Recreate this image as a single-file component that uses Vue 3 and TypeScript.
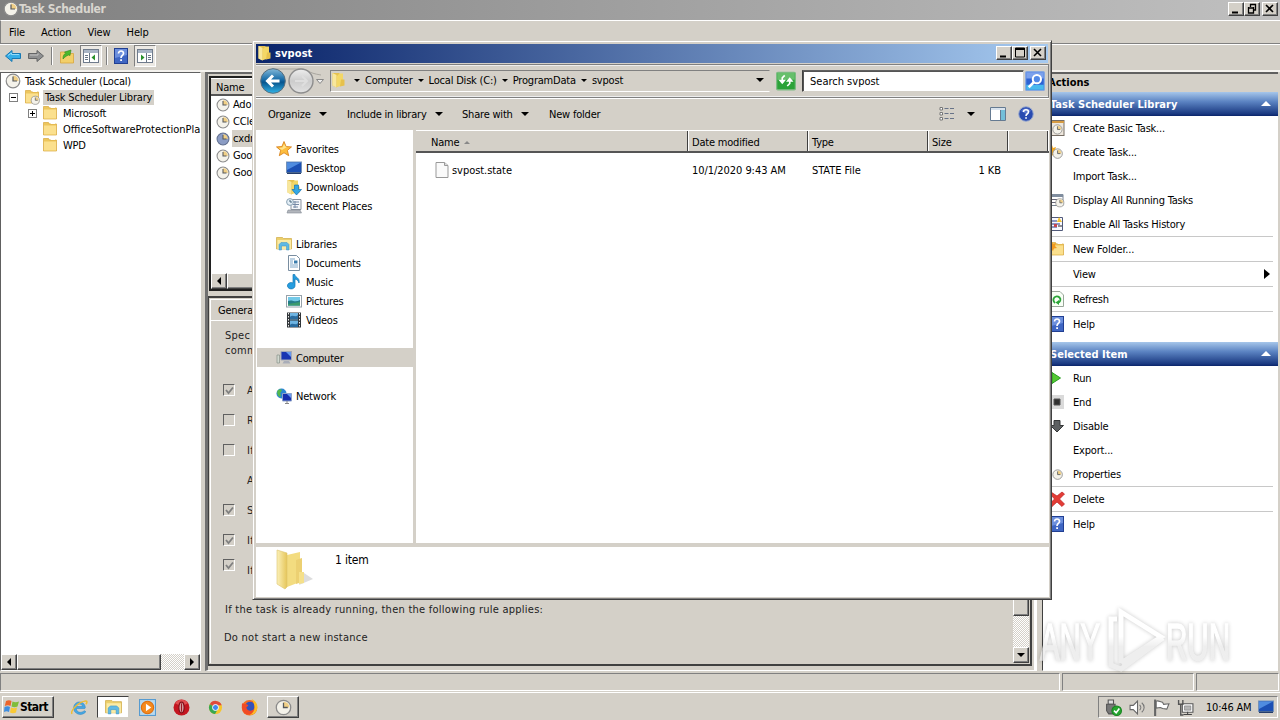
<script setup lang="ts">
/**
 * Task Scheduler console with an Explorer window on top and the taskbar below.
 */
import { h } from 'vue'

const clock = (face = '#f4f2ea', ring = '#8b8b8b') =>
  `<circle cx="8" cy="8" r="6.8" fill="${face}" stroke="${ring}" stroke-width="1.2"/><path d="M8 8V2.5A5.5 5.5 0 0 1 13.5 8Z" fill="#f0cf86"/><path d="M8 3.5V8h4" fill="none" stroke="#55585c" stroke-width="1.2"/>`
const folder =
  '<path d="M1.5 1.5h5l1 1.500h7v11h-13Z" fill="#edc65c" stroke="#d9a83c" stroke-width=".7"/><path d="M2 4.500h12v9H2Z" fill="#fbe08e"/><path d="M9 2.500h4" stroke="#fff" />'
const openFolder =
  '<path d="M1.500 1h7v12l-3 2.500-4-2Z" fill="#e5c14f"/><path d="M1.500 1 5.500 3v12.500l-4-2Z" fill="#f8e79c"/><path d="M8.500 1.500h3.500v12l-6 1.500V4Z" fill="#f3d766"/><path d="M10 7.500h3.500v6L9 14.500Z" fill="#e6c14c"/>'
const libs =
  '<path d="M.5 1.500h6l1 1h8v10.500H.5Z" fill="#ecd06c" stroke="#d0aa45" stroke-width=".7"/><path d="M1.500 4h13.500v9H1.500Z" fill="#fbeba6"/><path d="M3 14V8.500l2-2h6l2 2V14h-2.500v-4h-5v4Z" fill="#5fb9e4" stroke="#3b93c4" stroke-width=".5"/>'
const help =
  '<rect x="1.500" y=".5" width="13" height="15" fill="#3f66c3" stroke="#213f92"/><path d="M2 1h12v6L2 10Z" fill="#6c8fdd"/><path d="M5.500 5.600C5.500 2 10.800 2.300 10.500 5.500 10.300 7.500 8 7.600 8 10" fill="none" stroke="#fff" stroke-width="1.700"/><path d="M7.200 11.300h1.800V13H7.200Z" fill="#fff"/>'
const monitor =
  '<rect x=".5" y="2" width="15" height="10.500" fill="#1c50b4" stroke="#7391b8"/><path d="M1 2.500h14L1 10Z" fill="#4f8ce0"/><path d="M1 12.500h14v1.500H1Z" fill="#243d6b"/>'

const icons: Record<string, string> = {
  clock: clock(),
  clockBlue: clock('#8b9cc4', '#62708f'),
  folder,
  openFolder,
  libs,
  help,
  monitor,
  taskFolder: `${folder}<g transform="translate(6.500 6.500) scale(.6)">${clock()}</g>`,
  back: '<path d="M.5 8 7 2.500V5.500h8.500v5H7v3Z" fill="#35aee8" stroke="#1778b3"/><path d="M3 7.500 6.500 5v1.500H14" fill="none" stroke="#93dcfa"/>',
  forward: '<path d="M15.500 8 9 2.500V5.500H.5v5H9v3Z" fill="#8f9091" stroke="#646566"/><path d="M2 7h8V5.500" fill="none" stroke="#c3c3c3"/>',
  up: '<path d="M1.500 4h5l1 1.500h7v9.500h-13Z" fill="#f2cf69" stroke="#d8a53e" stroke-width=".8"/><path d="M4 11c0-4 1-5 3-5.500L5.500 4 12 2l-1 5.500L9.500 7C7 8 6 9 4 11Z" fill="#4bb82d" stroke="#308a1b" stroke-width=".6"/>',
  paneLeft: '<rect x=".5" y="1.500" width="15" height="13" fill="#fff" stroke="#6f7b8c"/><path d="M1 2h14v3H1Z" fill="#a9b5c5"/><path d="M6.500 5v9M2 7.500h3M2 9.500h3M2 11.500h3" stroke="#687686"/><path d="M12 6.500v6L8.500 9.500Z" fill="#29912a"/>',
  paneRight: '<rect x=".5" y="1.500" width="15" height="13" fill="#fff" stroke="#6f7b8c"/><path d="M1 2h14v3H1Z" fill="#a9b5c5"/><path d="M9.500 5v9M11 7.500h3M11 9.500h3M11 11.500h3" stroke="#687686"/><path d="M4 6.500v6L7.500 9.500Z" fill="#29912a"/>',
  wizard: `<rect x="1" y=".5" width="14" height="15" fill="#eee7dd" stroke="#776e64"/><path d="M1 1h14v2H1Z" fill="#d69b42"/><g transform="translate(3 4) scale(.68)">${clock()}</g>`,
  newTask: `<path d="m3 1 1 3 3-1-1 3 3 2-4 1-1 3-2-3-3-1 2-2-1-3Z" fill="#f2a820"/><g transform="translate(3 4) scale(.7)">${clock()}</g>`,
  running: `<path d="M1 2.500h13v11H1Z" fill="#fff" stroke="#788391"/><path d="M1 2h13v3H1Z" fill="#7f8d9e"/><path d="M3 7.500h5M3 10.500h4" stroke="#667"/><g transform="translate(6 6) scale(.6)">${clock()}</g>`,
  history: '<path d="M1.500 1.500h12v13h-12Z" fill="#f7f8ff" stroke="#515a7a"/><path d="M3 5h5M3 8h8M3 11h5" stroke="#6876ad" stroke-width="1.500"/><path d="m10 1 3 5H8Z" fill="#f5c32e"/><path d="M5 8h3v3H5Z" fill="#c44750"/><path d="M9 10h4" stroke="#222"/>',
  newFolder: `${folder}<path d="m3 1 1 2 3-1-1 3 2 2-3 .500L4 10 2 8H0l1-2-1-2 2-.5Z" fill="#f39b20"/>`,
  refresh: '<path d="M2 .5h9l3.500 3.500v11.500H2Z" fill="#f8fff6" stroke="#9aa69a"/><path d="M6 12c-4-4 1-9 4.500-5.500 2 2 .5 5-1.500 5" fill="none" stroke="#2aa437" stroke-width="1.800"/><path d="m10 9v5L6.500 11.500Z" fill="#2aa437"/>',
  run: '<path d="M3 2.500 11.500 8 3 13.500Z" fill="#54c833" stroke="#289c22"/>',
  end: '<path d="M1 1h14v14H1Z" fill="#dadada"/><path d="M5 5h6v6H5Z" fill="#303030" stroke="#555"/>',
  disable: '<path d="M5 2.500h6v5h3.500L8 14 1.500 7.500H5Z" fill="#5d6062" stroke="#37393a"/>',
  props: `<g transform="translate(3 3) scale(.7)">${clock()}</g>`,
  del: '<path d="m2 1 6 4 5-4 2.500 2-5 5 5 5-2.500 2.500L8 11l-5 4.500-2.500-2.500 5-5L1 3Z" fill="#e33d36" stroke="#bc1c20" stroke-width=".7"/>',
  star: '<path d="m8 .5 2.100 5 5.400.4-4.100 3.500 1.300 5.300L8 11.800l-4.700 2.900 1.300-5.300L.5 5.900l5.400-.4Z" fill="#fcbd3e" stroke="#d57b13" stroke-width=".8"/><path d="M8 3 6.500 6.500 3 7l3 2 5-3-1.500-.5Z" fill="#ffe48b"/>',
  downloads: `${openFolder}<path d="M8.500 6h4v4.500h3L10.500 16l-4.500-5.500h2.500Z" fill="#33a8e5" stroke="#1772b2" stroke-width=".7"/>`,
  recent: '<path d="M5 1.500h10v10H5Z" fill="#f4f6f9" stroke="#8c949f"/><path d="M7 4h6M7 6.500h6M7 9h5M9 3v7" stroke="#7589a5"/><path d="M2 12h12l1.500 3H1Z" fill="#b2b6bc" stroke="#858c95" stroke-width=".6"/><circle cx="4" cy="4" r="3.400" fill="#e4eff7" stroke="#8aa2b4"/><path d="M4 2v2h2" stroke="#47657a" fill="none"/>',
  doc: '<path d="M2.500.5h8l3 3v12h-11Z" fill="#fff" stroke="#798da0"/><path d="M4 4h5M4 6h3M4 8h3M4 10h8M4 12h8" stroke="#7ca6c8"/><path d="M8 5.500h3.500v3H8Z" fill="#397cad"/>',
  music: '<path d="M7 .5h1.800c0 3 5.500 3 4.200 8.500-.8-2.500-2-3.500-4-4v6.500a3.800 3.200 0 1 1-2-2.600Z" fill="#259de0" stroke="#1375b1" stroke-width=".7"/>',
  pictures: '<rect x=".5" y="2.500" width="15" height="11.500" fill="#fff" stroke="#97a2aa"/><path d="M2 4h12v8.500H2Z" fill="#73c9e8"/><path d="M2 8c4-2 7 2 12-1v5.500H2Z" fill="#257c89"/><path d="M2 11 14 9v3.500H2Z" fill="#3c9a6c"/>',
  videos: '<path d="M1 .5h14v15H1Z" fill="#303539"/><path d="M4 1h8v6.500H4ZM4 8.500h8V15H4Z" fill="#6db4e2"/><path d="M4 5c3-3 5 1 8-2v4H4ZM4 13c3-3 5 1 8-2v4H4Z" fill="#296b9e"/><path d="M2.500 1v14M13.500 1v14" stroke="#eee" stroke-dasharray="1.500 1.500"/>',
  computer: '<path d="M5 1.500h10.500v8.500H5Z" fill="#1935b2" stroke="#a3a9b8"/><path d="m10 2 5 0v5Z" fill="#6799ee"/><path d="M8 11h5l1.500 2.500h-8Z" fill="#a9adb8"/><path d="M1 5h2.500v8H1Z" fill="#d2d9d0" stroke="#88928a" stroke-width=".7"/>',
  network: '<circle cx="5.500" cy="5.500" r="5" fill="#2b86d3"/><path d="M2 2c3-2 5 0 3 2s1 3-1 5C2 8 0 5 2 2Z" fill="#54b94b"/><path d="M6.500 5.500h9V13h-9Z" fill="#172fae" stroke="#8da2c8"/><path d="m11 6 4 0v4Z" fill="#6899ef"/><path d="M11 13v2M9 15.500h4" stroke="#888"/>',
  file: '<path d="M2 .5h8.500l3.500 3v12H2Z" fill="#fafafa" stroke="#999"/><path d="M10.500.5v3H14" fill="#ddd" stroke="#999"/>',
  windows: '<path d="M2 2c2-1 4-1 5.500 0l-1 5C5 6 3 6 .8 7Z" fill="#ec642c"/><path d="M8.500 2.500c2 1 4 1 6.500 0l-1.500 5c-2 1-4 1-6 0Z" fill="#80bd3c"/><path d="M.5 8c2-1 4-1 5.500 0l-1 5c-2-1-3-1-5 0Z" fill="#3e8de0"/><path d="M7 8.500c2 1 4 1 6 0l-1 5c-2 1-4 1-6 0Z" fill="#f9c936"/>',
  ie: '<path d="M13 9H5c0 4 5 4.500 7.500 2l1.500 1C10 17 2 14 2.500 8 3 1 13 1 13.500 8Zm-8-2h6C10 4 6 4 5 7" fill="#45a8e3" stroke="#2a82c4" stroke-width=".5"/><path d="M1 14c-2-3 6-11 12-12 3-.5 2 2 1 3" fill="none" stroke="#efbd32" stroke-width="1.400"/>',
  wmp: '<rect x=".5" y=".5" width="15" height="15" fill="#b7d9ef" stroke="#579bd0"/><circle cx="8" cy="8" r="5.800" fill="#f58a1d" stroke="#df6d0c"/><path d="m6.500 4.500 5 3.500-5 3.500Z" fill="#fff"/>',
  opera: '<circle cx="8" cy="8" r="7.500" fill="#c41620"/><path d="M2 4a7 7 0 0 1 12 0L8 7Z" fill="#e14e50"/><ellipse cx="8" cy="8" rx="2.400" ry="5" fill="#e9d7d5" stroke="#86101a" stroke-width="1.200"/><path d="M8 4v8" stroke="#9f1620" stroke-width="1.500"/>',
  chrome: '<circle cx="8" cy="8" r="7" fill="#f5c52c"/><path d="M8 8 2 4.400A7 7 0 0 1 14.600 5.500H8Z" fill="#df493c"/><path d="M2 4.400A7 7 0 0 0 7.500 15L10.500 9.500 8 8Z" fill="#36a852"/><circle cx="8" cy="8" r="3.200" fill="#4188ed" stroke="#fff"/>',
  firefox: '<circle cx="8" cy="8.200" r="7.300" fill="#f36c20"/><circle cx="8.500" cy="7" r="4.500" fill="#3452ba"/><path d="M1 4c2 1 4 0 6 2L5 8c1 4 6 4 9 0-1 9-15 10-13-4Z" fill="#f14a24"/><path d="M10 0c4 2 6 5 5.300 9-.8 4-4 6-7 6 5-3 6-8 1.700-15Z" fill="#fbbd27"/>',
  usb: '<path d="M3 1h5v4H3Z" fill="#ddd" stroke="#555"/><path d="M1.500 5h8v6l-2 3h-4l-2-3Z" fill="#777" stroke="#555"/><circle cx="11" cy="11" r="4.500" fill="#25a52e" stroke="#178420"/><path d="m8.500 11 2 2 3-4" fill="none" stroke="#fff" stroke-width="1.500"/>',
  volume: '<path d="M1 6h3l4-4v12l-4-4H1Z" fill="#fff" stroke="#666"/><path d="M10 5.500c1.500 1.500 1.500 3.500 0 5M12 3.500c3 2.500 3 6.500 0 9" fill="none" stroke="#777"/>',
  flag: '<path d="M1.500 1v14.500h1V1Z" fill="#fff" stroke="#666"/><path d="M3 2c2-1 4 1 6 1l1 2 5-.5-2 5-4-.5-2-1-4 .5Z" fill="#fff" stroke="#666"/>',
  lan: '<path d="M5 4.500h10v8H5Z" fill="#fff" stroke="#555"/><path d="M7 6.500h6v4H7Z" fill="#b5b5b5" stroke="#777" stroke-width=".6"/><path d="M6 14.500h8M10 12v3" stroke="#444"/><path d="M1.500 1v4h4V1M3.500 5v10H6" fill="none" stroke="#555" stroke-width="1.300"/>',
  details: '<path d="M1 1.500h2.500V4H1ZM1 6.500h2.500V9H1ZM1 11.500h2.500V14H1Z" fill="#fff" stroke="#777"/><path d="M5.500 2.500h4M11 2.500h4M5.500 7.500h4M11 7.500h4M5.500 12.500h4M11 12.500h4" stroke="#687388"/>',
  preview: '<path d="M.5 1.500h15v13H.5Z" fill="#fff" stroke="#657a91"/><path d="M1 2h14v2H1Z" fill="#d9e3ed"/><path d="M10.500 4v10" stroke="#657a91"/><path d="M11 4h4v10h-4Z" fill="#73bfd9"/>',
  helpRound: '<circle cx="8" cy="8" r="7.300" fill="#294bb0" stroke="#9babcf"/><path d="M3 5a6 6 0 0 1 10 0L8 8Z" fill="#5875cc"/><path d="M5.500 6C5.500 3 10.500 3 10.500 6 10.500 8 8 7.500 8 10" fill="none" stroke="#fff" stroke-width="1.600"/><path d="M7.200 11.200h1.700v1.500H7.200Z" fill="#fff"/>',
  go: '<rect x=".5" y="1" width="15" height="14" rx="1" fill="#2ba238" stroke="#7dbb83"/><path d="M1 1.500h14v5.500H1Z" fill="#66bf6b"/><path d="M7 3.500 5 5.500v3.500M9 12l2-2V7" fill="none" stroke="#fff" stroke-width="1.300"/><path d="M2 7h6L5 10.500ZM8 8.500h6L11 5Z" fill="#fff"/>',
  search: '<rect x=".5" y=".5" width="15" height="15" rx="1" fill="#2d63d4" stroke="#86a8df"/><path d="M1 11h14v4H1Z" fill="#49b9ed"/><path d="M1 1h14v5H1Z" fill="#7ba1ec"/><circle cx="9.500" cy="6.500" r="3.300" fill="#5289e6" stroke="#fff" stroke-width="1.600"/><path d="m7 9-4 4" stroke="#fff" stroke-width="2"/>',
}

function Ico(props: { n: string; s?: number }) {
  const size = props.s ?? 16
  return h('svg', { width: size, height: size, viewBox: '0 0 16 16', innerHTML: icons[props.n] })
}
Ico.props = ['n', 's']

interface Action {
  icon?: string
  label: string
  sep?: boolean
  sub?: boolean
}

const actionGroups: { title: string; items: Action[] }[] = [
  {
    title: 'Task Scheduler Library',
    items: [
      { icon: 'wizard', label: 'Create Basic Task...' },
      { icon: 'newTask', label: 'Create Task...' },
      { label: 'Import Task...' },
      { icon: 'running', label: 'Display All Running Tasks' },
      { icon: 'history', label: 'Enable All Tasks History' },
      { icon: 'newFolder', label: 'New Folder...', sep: true },
      { label: 'View', sep: true, sub: true },
      { icon: 'refresh', label: 'Refresh', sep: true },
      { icon: 'help', label: 'Help', sep: true },
    ],
  },
  {
    title: 'Selected Item',
    items: [
      { icon: 'run', label: 'Run' },
      { icon: 'end', label: 'End' },
      { icon: 'disable', label: 'Disable' },
      { label: 'Export...' },
      { icon: 'props', label: 'Properties' },
      { icon: 'del', label: 'Delete', sep: true },
      { icon: 'help', label: 'Help', sep: true },
    ],
  },
]

const navGroups = [
  {
    icon: 'star',
    label: 'Favorites',
    items: [
      { icon: 'monitor', label: 'Desktop' },
      { icon: 'downloads', label: 'Downloads' },
      { icon: 'recent', label: 'Recent Places' },
    ],
  },
  {
    icon: 'libs',
    label: 'Libraries',
    items: [
      { icon: 'doc', label: 'Documents' },
      { icon: 'music', label: 'Music' },
      { icon: 'pictures', label: 'Pictures' },
      { icon: 'videos', label: 'Videos' },
    ],
  },
  { icon: 'computer', label: 'Computer', active: true, items: [] },
  { icon: 'network', label: 'Network', items: [] },
]

const tasks = ['Ado', 'CCle', 'cxdr', 'Goo', 'Goo']
const settings = [
  { label: 'Al', box: true, on: true },
  { label: 'Ru', box: true, on: false },
  { label: 'If', box: true, on: false },
  { label: 'At', box: false, on: false },
  { label: 'St', box: true, on: true },
  { label: 'If', box: true, on: true },
  { label: 'If', box: true, on: true, raised: true },
]
const crumbs = ['Computer', 'Local Disk (C:)', 'ProgramData', 'svpost']
const launchers = ['ie', 'libs', 'wmp', 'opera', 'chrome', 'firefox', 'clock']
const tray = ['usb', 'volume', 'flag', 'lan']
</script>

<template>
  <div class="desktop">
    <header class="main-title">
      <Ico n="clock" />
      <b>Task Scheduler</b>
      <div class="win-buttons">
        <i class="raised"><svg width="14" height="12"><path d="M3 9.500h6" stroke="#000" stroke-width="2" /></svg></i>
        <i class="raised"><svg width="14" height="12"><path d="M5 1.500h6M5.500 1v3M10.500 1v6H9M3 5h6M3.500 4v6h5V4" fill="none" stroke="#000" stroke-width="1.300" /></svg></i>
        <i class="raised close"><svg width="14" height="12"><path d="m3 2 7 7M10 2 3 9" stroke="#000" stroke-width="1.600" /></svg></i>
      </div>
    </header>
    <nav class="menu"><span>File</span><span>Action</span><span>View</span><span>Help</span></nav>
    <div class="toolbar">
      <Ico n="back" /><Ico n="forward" class="fwd" /><i class="divider" />
      <Ico n="up" class="up" /><span class="pressed"><Ico n="paneLeft" /></span><i class="divider second" />
      <Ico n="help" class="hlp" /><span class="pressed"><Ico n="paneRight" /></span>
    </div>

    <main class="workspace">
      <section class="tree">
        <div class="tree-body">
          <div class="node root"><Ico n="clock" /><span>Task Scheduler (Local)</span></div>
          <div class="node lib"><i class="expander" /><Ico n="taskFolder" /><span class="chosen">Task Scheduler Library</span></div>
          <div class="node leaf"><i class="expander plus" /><Ico n="folder" /><span>Microsoft</span></div>
          <div class="node leaf"><i class="expander none" /><Ico n="folder" /><span class="office">OfficeSoftwareProtectionPla</span></div>
          <div class="node leaf"><i class="expander none" /><Ico n="folder" /><span>WPD</span></div>
        </div>
        <div class="scroll-h">
          <i class="raised arrow"><svg width="12" height="12"><path d="M8 2v8L4 6Z" /></svg></i>
          <i class="raised thumb" />
          <i class="track" />
          <i class="raised arrow"><svg width="12" height="12"><path d="M4 2v8l4-4Z" /></svg></i>
        </div>
      </section>

      <section class="middle">
        <div class="task-list">
          <div class="col-head">Name</div>
          <div v-for="(t, i) in tasks" :key="i" class="task" :class="{ sel: i === 2 }">
            <Ico :n="i === 2 ? 'clockBlue' : 'clock'" :s="14" /><span>{{ t }}</span>
          </div>
          <div class="list-scroll"><i class="raised arrow"><svg width="12" height="12"><path d="M8 2v8L4 6Z" /></svg></i><i class="raised thumb" /></div>
        </div>
        <div class="task-detail">
          <div class="tab">Genera</div>
          <div class="sheet">
            <div class="page">
              <p class="intro">Spec<br />comm</p>
              <div v-for="(s, i) in settings" :key="i" class="setting">
                <i v-if="s.box" class="check" :class="{ lift: s.raised }"><svg v-if="s.on" width="9" height="9"><path d="m1 4 2.500 3L8 1.500" fill="none" stroke="#808080" stroke-width="1.800" /></svg></i>
                <i v-else class="no-check" />
                <span>{{ s.label }}</span>
              </div>
              <p class="rule">If the task is already running, then the following rule applies:</p>
              <p class="instance">Do not start a new instance</p>
            </div>
            <div class="scroll-v"><i class="raised thumb" /><i class="track" /><i class="raised arrow"><svg width="12" height="12"><path d="M2 4h8L6 8Z" /></svg></i></div>
          </div>
        </div>
      </section>

      <aside class="actions">
        <div class="actions-head">Actions</div>
        <div v-for="g in actionGroups" :key="g.title" class="group">
          <div class="group-title"><b>{{ g.title }}</b><svg width="10" height="6"><path d="M0 5h10L5 0Z" fill="#fff" /></svg></div>
          <div v-for="a in g.items" :key="a.label" class="action" :class="{ sep: a.sep }">
            <Ico v-if="a.icon" :n="a.icon" /><i v-else class="blank" />
            <span>{{ a.label }}</span>
            <svg v-if="a.sub" class="sub" width="6" height="10"><path d="M0 0v10l6-5Z" /></svg>
          </div>
        </div>
      </aside>
    </main>

    <footer class="status"><i class="wide" /><i class="mid" /><i /></footer>
    <footer class="taskbar">
      <button class="start raised"><Ico n="windows" /><b>Start</b></button>
      <div class="launch">
        <span v-for="l in launchers" :key="l" :class="[l, { raised: l === 'clock' }]"><Ico :n="l" :s="l === 'chrome' ? 15 : 17" /></span>
      </div>
      <div class="tray">
        <Ico v-for="t in tray" :key="t" :n="t" :s="17" />
        <time>10:46 AM</time>
        <Ico n="monitor" />
      </div>
    </footer>

    <section class="explorer">
      <header class="ex-title">
        <Ico n="openFolder" /><b>svpost</b>
        <div class="win-buttons">
          <i class="raised"><svg width="14" height="12"><path d="M3 9.500h6" stroke="#000" stroke-width="2" /></svg></i>
          <i class="raised"><svg width="14" height="12"><path d="M2.500 1v9h9V1Z" fill="none" stroke="#000" /><path d="M2 2h10" stroke="#000" stroke-width="2" /></svg></i>
          <i class="raised close"><svg width="14" height="12"><path d="m3 2 7 7M10 2 3 9" stroke="#000" stroke-width="1.600" /></svg></i>
        </div>
      </header>
      <div class="address">
        <svg class="travel" width="70" height="28">
          <defs>
            <linearGradient id="blue" x2="0" y2="1"><stop stop-color="#83b8d8" /><stop offset=".45" stop-color="#176ba7" /><stop offset=".55" stop-color="#07558e" /><stop offset="1" stop-color="#31b4e8" /></linearGradient>
            <linearGradient id="grey" x2="0" y2="1"><stop stop-color="#eee" /><stop offset=".5" stop-color="#ccc" /><stop offset="1" stop-color="#e2e2e2" /></linearGradient>
          </defs>
          <path d="M13 2h28c8 0 7 4 21 6" fill="none" stroke="#aaa7a0" />
          <circle cx="14" cy="14" r="12.300" fill="url(#blue)" stroke="#596e7d" />
          <path d="M20.500 14H9m5-5.500L8.500 14l5.500 5.500" fill="none" stroke="#fff" stroke-width="3" />
          <circle cx="42" cy="14" r="12" fill="url(#grey)" stroke="#8d8d8d" stroke-width="1.400" />
          <path d="M36 14h12m-5-5 5 5-5 5" fill="none" stroke="#dedede" stroke-width="2" />
          <path d="M57.500 12.500h7L61 16.500Z" fill="#eee" stroke="#888" />
        </svg>
        <div class="crumbs">
          <Ico n="openFolder" />
          <span v-for="c in crumbs" :key="c" class="crumb"><i class="down small" />{{ c }}</span>
          <i class="down" />
        </div>
        <Ico n="go" :s="20" class="go" />
        <div class="search">Search svpost</div>
        <Ico n="search" :s="20" class="find" />
      </div>
      <div class="commands">
        <span class="c1">Organize<i class="down" /></span>
        <span class="c2">Include in library<i class="down" /></span>
        <span class="c3">Share with<i class="down" /></span>
        <span>New folder</span>
        <div class="view-tools"><Ico n="details" /><i class="down" /><Ico n="preview" /><Ico n="helpRound" /></div>
      </div>
      <div class="ex-body">
        <nav class="places">
          <div v-for="g in navGroups" :key="g.label" class="place-group">
            <div class="place" :class="{ active: g.active }"><Ico :n="g.icon" /><span>{{ g.label }}</span></div>
            <div v-for="p in g.items" :key="p.label" class="place child"><Ico :n="p.icon" /><span>{{ p.label }}</span></div>
          </div>
        </nav>
        <div class="files">
          <div class="file-head">
            <span>Name<svg width="6" height="3"><path d="M0 3h6L3 0Z" fill="#888" /></svg></span><span>Date modified</span><span>Type</span><span>Size</span><span />
          </div>
          <div class="file-row"><span><Ico n="file" />svpost.state</span><span class="date">10/1/2020 9:43 AM</span><span>STATE File</span><span class="size">1 KB</span></div>
        </div>
      </div>
      <footer class="ex-details">
        <svg width="44" height="44" viewBox="0 0 44 44">
          <defs>
            <linearGradient id="leaf" x2="1" y2="0"><stop stop-color="#fbf0b8" /><stop offset="1" stop-color="#e6c65a" /></linearGradient>
          </defs>
          <path d="m27 37 14-6-9-6Z" fill="#ddd" />
          <path d="M15 7 28 4v30l-13 5Z" fill="#f3dc80" />
          <path d="M24 12 30 10v24l-6 2Z" fill="#ecd072" />
          <path d="M5 2 15 5v34l-2 2-8-5Z" fill="url(#leaf)" stroke="#dcc36b" stroke-width=".6" />
          <path d="M27 24h5v11l-5 1Z" fill="#f5e08a" />
        </svg>
        <span>1 item</span>
      </footer>
    </section>

    <svg class="watermark" width="206" height="70" viewBox="0 0 206 70">
      <defs>
        <linearGradient id="wm" gradientUnits="userSpaceOnUse" x1="0" x2="0" y1="0" y2="66">
          <stop offset=".45" stop-color="#fff" /><stop offset=".6" stop-color="#e8e8e8" />
        </linearGradient>
      </defs>
      <text x="3" y="53" textLength="60" lengthAdjust="spacingAndGlyphs">ANY</text>
      <path d="M80 12H74V58L84 62 126 31M84 56V5L124 30 84 56" />
      <text x="129" y="53" textLength="64" lengthAdjust="spacingAndGlyphs">RUN</text>
    </svg>
  </div>
</template>

<style>
body {
  margin: 0;
  overflow: hidden;
}
</style>

<style scoped>
.desktop {
  position: relative;
  display: flex;
  flex-direction: column;
  width: 1280px;
  height: 720px;
  background: #d4d0c8;
  overflow: hidden;
  color: #000;
  font: 11px/13px 'DejaVu Sans Condensed', 'DejaVu Sans', sans-serif;
  font-stretch: condensed;
  letter-spacing: -0.2px;
  white-space: nowrap;
}
.desktop * {
  box-sizing: border-box;
}
svg {
  flex: none;
  display: block;
}
i {
  flex: none;
  display: block;
}
p {
  margin: 0;
}
.raised {
  background: #d4d0c8;
  border: 1px solid;
  border-color: #fff #404040 #404040 #fff;
  box-shadow: inset -1px -1px #808080;
}
.main-title {
  display: flex;
  align-items: center;
  flex: none;
  height: 20px;
  padding: 0 2px 2px 3px;
  color: #d9d6cf;
  background: linear-gradient(90deg, #808080, #c0c0c0);
}
.main-title b {
  font-size: 12px;
  letter-spacing: -0.35px;
}
.win-buttons {
  display: flex;
  margin-left: auto;
}
.win-buttons i {
  width: 16px;
  height: 14px;
}
.win-buttons .close {
  margin-left: 2px;
}
.menu {
  display: flex;
  align-items: center;
  gap: 16px;
  flex: none;
  height: 24px;
  padding-left: 8px;
  border-top: 1px solid #fff;
  border-bottom: 1px solid #808080;
  border-left: 1px solid #808080;
  letter-spacing: -0.1px;
}
.toolbar {
  display: flex;
  align-items: center;
  flex: none;
  height: 28px;
  padding: 0 0 3px 5px;
  border-top: 1px solid #fff;
  border-bottom: 2px solid #f4f2ee;
}
.fwd {
  margin-left: 7px;
}
.divider {
  width: 2px;
  height: 18px;
  margin-left: 7px;
  border-left: 1px solid #808080;
  border-right: 1px solid #fff;
}
.second {
  margin-left: 4px;
}
.up {
  margin: 0 5px 0 6px;
}
.hlp {
  margin: 0 5px 0 5px;
}
.pressed {
  display: flex;
  align-items: center;
  justify-content: center;
  width: 22px;
  height: 22px;
  background: #ece9e4;
  border: 1px solid;
  border-color: #808080 #fff #fff #808080;
}
.workspace {
  display: flex;
  flex: none;
  height: 599px;
}
.tree {
  display: flex;
  flex-direction: column;
  width: 201px;
  height: 599px;
  border: 1px solid;
  border-color: #606060 #fff #fff #606060;
}
.tree-body {
  flex: 1;
  background: #fff;
  overflow: hidden;
}
.node {
  display: flex;
  align-items: center;
  height: 16px;
}
.root {
  padding-left: 4px;
}
.root span {
  margin-left: 4px;
}
.lib {
  padding-left: 8px;
}
.lib svg {
  margin-left: 6px;
}
.chosen {
  margin-left: 3px;
  padding: 1px 2px;
  background: #d4d0c8;
}
.leaf {
  padding-left: 27px;
}
.leaf svg {
  margin: 0 5px 0 5px;
}
.office {
  letter-spacing: 0;
}
.expander {
  width: 9px;
  height: 9px;
  border: 1px solid #808080;
  background: linear-gradient(#000, #000) center / 5px 1px no-repeat;
}
.plus {
  background: linear-gradient(#000, #000) center / 5px 1px no-repeat, linear-gradient(#000, #000) center / 1px 5px no-repeat;
}
.none {
  visibility: hidden;
}
.scroll-h,
.list-scroll {
  display: flex;
  flex: none;
  height: 16px;
}
.arrow {
  width: 16px;
  height: 16px;
  padding: 1px;
}
.scroll-h .thumb {
  width: 144px;
}
.track {
  flex: 1;
  background: repeating-conic-gradient(#fff 0 25%, #d4d0c8 0 50%) 0 0 / 2px 2px;
}
.middle {
  display: flex;
  flex-direction: column;
  gap: 5px;
  width: 832px;
  margin-left: 4px;
  padding: 2px 0 4px;
  border: 1px solid #808080;
  border-width: 2px 3px 1px 3px;
  border-color: #686868 #fff #fff #707070;
}
.task-list {
  display: flex;
  flex-direction: column;
  height: 215px;
  margin: 0 3px 0 1px;
  border: 2px solid #202020;
  background: #fff;
}
.col-head {
  height: 18px;
  padding: 2px 5px;
  background: #d4d0c8;
  border-bottom: 2px solid #555;
  border-top: 1px solid #fff;
}
.task {
  display: flex;
  align-items: center;
  height: 17px;
  padding-left: 5px;
}
.task span {
  margin-left: 2px;
  padding: 2px 1px;
}
.task.sel span {
  width: 60px;
  background: #d4d0c8;
}
.list-scroll {
  margin-top: auto;
}
.list-scroll .thumb {
  width: 400px;
}
.task-detail {
  display: flex;
  flex-direction: column;
  flex: 1;
  margin: 0 2px 0 0;
  padding: 1px;
  border: 2px solid #404040;
  border-width: 2px 2px 2px 1px;
}
.tab {
  width: 60px;
  height: 21px;
  padding: 4px 0 0 7px;
  border: 1px solid #fff;
  border-bottom: 0;
}
.sheet {
  display: flex;
  flex: 1;
  border-top: 1px solid #fff;
  border-left: 1px solid #fff;
}
.page {
  flex: 1;
  padding: 7px 0 0 12px;
  color: #222;
  letter-spacing: 0.25px;
}
.intro {
  height: 47px;
  padding-left: 2px;
  line-height: 15px;
}
.setting {
  display: flex;
  align-items: center;
  height: 30px;
}
.check,
.no-check {
  width: 12px;
  height: 12px;
  margin-right: 12px;
}
.check {
  padding: 1px;
  border: 1px solid;
  border-color: #606060 #fff #fff #606060;
}
.lift {
  margin-bottom: 10px;
}
.rule {
  margin-top: 18px;
  padding-left: 2px;
}
.instance {
  margin-top: 15px;
  padding-left: 1px;
}
.scroll-v {
  display: flex;
  flex-direction: column;
  width: 16px;
}
.scroll-v .thumb {
  height: 295px;
}
.actions {
  display: flex;
  flex-direction: column;
  width: 236px;
  margin-left: 5px;
  border-top: 2px solid #606060;
  border-left: 1px solid #404040;
  border-bottom: 1px solid #fff;
  background: #fff;
}
.actions-head {
  height: 18px;
  padding: 2px 5px;
  background: #d4d0c8;
  font-weight: bold;
  letter-spacing: 0;
}
.group + .group {
  margin-top: 6px;
}
.group-title {
  display: flex;
  align-items: center;
  justify-content: space-between;
  height: 24px;
  padding: 0 7px;
  color: #fff;
  background: linear-gradient(#a6c6ea, #5b83c2 40%, #1b3a82 90%, #0a246a);
  letter-spacing: 0.02px;
}
.action {
  display: flex;
  align-items: center;
  height: 24px;
  padding-left: 6px;
}
.action.sep {
  height: 25px;
  margin-right: 5px;
  border-top: 1px solid #c8c8c8;
}
.blank {
  width: 16px;
}
.action span {
  margin-left: 8px;
}
.sub {
  margin: 0 3px 0 auto;
}
.status {
  display: flex;
  gap: 2px;
  flex: none;
  height: 21px;
  padding: 2px 1px 1px 0;
}
.status i {
  flex: 1;
  border: 1px solid;
  border-color: #808080 #fff #fff #808080;
}
.status .wide {
  flex: 0 0 1060px;
}
.status .mid {
  flex: 0 0 132px;
}
.taskbar {
  display: flex;
  flex: none;
  height: 28px;
  padding: 3px 2px 2px;
  border-top: 1px solid #fff;
}
.start {
  display: flex;
  align-items: center;
  width: 52px;
  height: 22px;
  padding: 0 1px;
  font: 12px 'DejaVu Sans Condensed', sans-serif;
  letter-spacing: -0.6px;
}
.launch {
  display: flex;
  margin-left: 9px;
}
.launch span {
  display: flex;
  align-items: center;
  justify-content: center;
  width: 32px;
  height: 22px;
  margin-right: 2px;
}
.launch .libs {
  background: #fff;
  border: 1px solid;
  border-color: #404040 #d4d0c8 #d4d0c8 #404040;
}
.tray {
  display: flex;
  align-items: center;
  gap: 7px;
  width: 180px;
  margin-left: auto;
  padding-left: 6px;
  border: 1px solid;
  border-color: #808080 #fff #fff #808080;
}
.tray time {
  margin: 0 0 0 5px;
}
.explorer {
  position: absolute;
  left: 252px;
  top: 40px;
  display: flex;
  flex-direction: column;
  width: 800px;
  height: 560px;
  padding: 2px 2px 1px 3px;
  background: #d4d0c8;
  border: 1px solid;
  border-color: #d4d0c8 #404040 #404040 #d4d0c8;
  box-shadow: inset 1px 1px #fff, inset -1px -1px #808080;
}
.ex-title {
  display: flex;
  align-items: center;
  flex: none;
  height: 19px;
  margin: 1px 1px 0 0;
  padding: 0 2px 1px 1px;
  color: #fff;
  background: linear-gradient(90deg, #0a246a, #a6caf0);
}
.ex-title b {
  margin-left: 2px;
  letter-spacing: 0.1px;
}
.address {
  display: flex;
  align-items: center;
  flex: none;
  height: 34px;
  margin-top: 1px;
  padding: 0 1px 0 3px;
  border: 1px solid #808080;
  border-width: 1px 1px 1px 0;
  box-shadow: inset 0 1px #eee, inset 0 -1px #eee;
}
.crumbs {
  display: flex;
  align-items: center;
  width: 440px;
  height: 22px;
  margin-left: 1px;
  padding-bottom: 2px;
  border: 1px solid;
  border-color: #808080 transparent #fff #808080;
}
.crumbs > svg {
  margin-right: 7px;
}
.crumbs > .down {
  margin: 0 5px 0 auto;
}
.crumb {
  display: flex;
  align-items: center;
  gap: 5px;
  margin-right: 5px;
}
.down {
  width: 0;
  border: 4px solid transparent;
  border-top-color: #000;
  border-bottom: 0;
}
.small {
  border-width: 3px 3px 0;
}
.go {
  margin-left: 6px;
}
.search {
  width: 222px;
  height: 22px;
  margin: 0 1px 0 6px;
  padding: 4px 7px;
  background: #fff;
  border: 1px solid;
  border-color: #606060 #d4d0c8 #d4d0c8 #404040;
  box-shadow: inset 1px 1px #555;
  letter-spacing: 0;
}
.commands {
  display: flex;
  align-items: center;
  flex: none;
  height: 32px;
  padding: 0 15px 1px 12px;
  border-top: 1px solid #fff;
}
.commands span {
  display: flex;
  align-items: center;
  gap: 8px;
}
.commands .c1 {
  width: 79px;
}
.commands .c2 {
  width: 115px;
}
.commands .c3 {
  width: 87px;
}
.view-tools {
  display: flex;
  align-items: center;
  gap: 12px;
  margin-left: auto;
}
.view-tools .down {
  margin-right: 3px;
}
.ex-body {
  display: grid;
  grid-template-columns: 157px 1fr;
  gap: 3px;
  flex: none;
  height: 413px;
}
.places {
  padding-top: 9px;
  background: #fff;
}
.place-group {
  padding-bottom: 19px;
}
.place {
  display: flex;
  align-items: center;
  gap: 4px;
  height: 19px;
  padding-left: 20px;
}
.place span {
  padding-top: 2px;
}
.place.active {
  margin-left: 1px;
  padding-left: 19px;
  background: #d4d0c8;
}
.child {
  padding-left: 30px;
}
.files {
  background: #fff;
}
.file-head,
.file-row {
  display: grid;
  grid-template-columns: 272px 120px 120px 80px 40px;
  align-items: center;
}
.file-head {
  height: 23px;
  background: #d4d0c8;
  border-top: 1px solid #fff;
  border-bottom: 2px solid #555;
}
.file-head span {
  display: flex;
  align-items: center;
  height: 20px;
  padding: 2px 4px 0;
  border-right: 1px solid #404040;
  box-shadow: 1px 0 #fff;
}
.file-head span:first-child {
  gap: 5px;
  padding-left: 15px;
}
.file-row {
  height: 17px;
  margin-top: 9px;
  letter-spacing: -0.05px;
}
.file-row span {
  display: flex;
  align-items: center;
  padding-left: 4px;
}
.file-row span:first-child {
  gap: 2px;
  padding-left: 18px;
}
.file-row svg {
  margin-top: -2px;
}
.file-row .size {
  justify-content: flex-end;
  padding-right: 7px;
}
.ex-details {
  display: flex;
  flex: none;
  height: 50px;
  margin-top: 4px;
  padding: 1px 0 0 16px;
  background: #fff;
  font-size: 12px;
}
.ex-details span {
  margin: 6px 0 0 19px;
}
.watermark {
  position: absolute;
  left: 1037px;
  top: 607px;
  overflow: visible;
  filter: drop-shadow(0 0 2px rgba(0, 0, 0, 0.3));
  opacity: 0.7;
}
.watermark text {
  fill: url(#wm);
  font: 51px 'Liberation Sans', sans-serif;
  stroke: url(#wm);
  stroke-width: 1.5;
}
.watermark path {
  fill: none;
  stroke: url(#wm);
  stroke-width: 5;
}
</style>
